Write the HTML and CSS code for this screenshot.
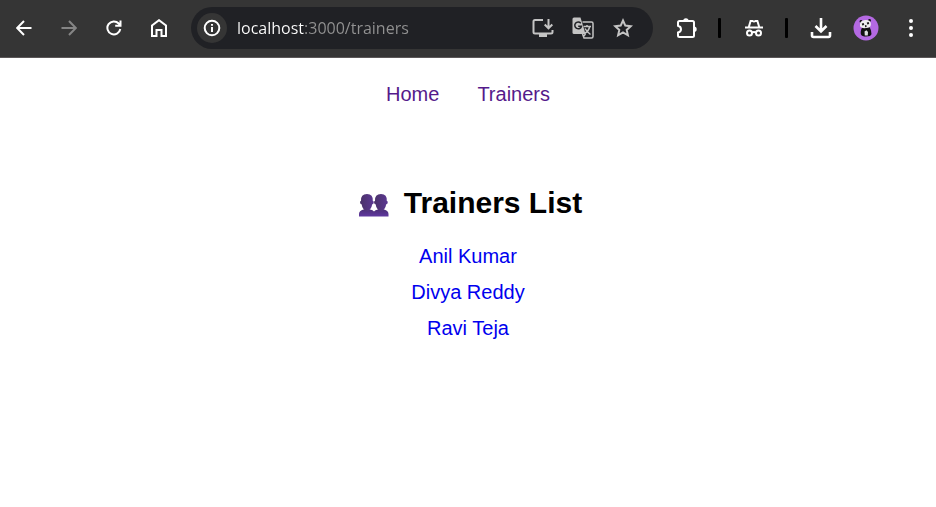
FILE: index.html
```html
<!DOCTYPE html>
<html lang="en">
<head>
<meta charset="utf-8">
<title>Trainers</title>
<link rel="stylesheet" href="styles.css">
</head>
<body>
<header class="toolbar">
  <button class="tool" aria-label="Back"><svg width="16" height="16" viewBox="0 0 16 16"><path d="M15.500 8H1.500M8 1L1.200 8L8 15"/></svg></button>
  <button class="tool dim" aria-label="Forward"><svg width="16" height="16" viewBox="0 0 16 16"><path d="M.5 8H14.500M8 1L14.800 8L8 15"/></svg></button>
  <button class="tool" aria-label="Reload"><svg width="16" height="16" viewBox="0 0 16 16"><path d="M14.300 9A6.500 6.500 0 1 1 12.700 3.500L14.500 5.300M14.500 .5V5.800H9.200"/></svg></button>
  <button class="tool" aria-label="Home page"><svg width="16" height="18" viewBox="0 0 16 18"><path d="M1 6.500L8 1.200L15 6.500V17H10.500V11H5.500V17H1Z"/></svg></button>
  <form class="omnibox">
    <button type="button" class="site-info" aria-label="Site information"><svg width="18" height="18" viewBox="0 0 18 18"><circle cx="9" cy="9" r="7.300"/><path d="M9 8V13M9 5V6.800"/></svg></button>
    <input class="url" type="text" aria-label="Address" value="localhost:3000/trainers" spellcheck="false">
    <button type="button" class="action" aria-label="Install"><svg width="22" height="20" viewBox="0 0 22 20"><path d="M11 2H3Q1.500 2 1.500 3.500V14Q1.500 15.500 3 15.500H19Q20.500 15.500 20.500 14V12M16.500 1V10M12.700 6.500L16.500 10.300L20.300 6.500"/><path class="solid" d="M7 15H15V19H7Z"/></svg></button>
    <button type="button" class="action" aria-label="Translate"><svg width="22" height="22" viewBox="0 0 22 22"><path class="solid" d="M2 .5H8.500L13.500 17H2Q.5 17 .5 15.500V2Q.5 .5 2 .5Z"/><path class="cut" d="M8.800 6.200A3.400 3.400 0 1 0 9.500 9.200H6.200"/><path class="thin" d="M10.500 5H19.500Q21 5 21 6.500V19.500Q21 21 19.500 21H12L10.500 17M11.500 9.500H19M15 8V9.500M17.700 9.500Q16.800 14 12.500 16.500M13 11.500Q15 15 18.500 17.500M13.500 17L11 20"/></svg></button>
    <button type="button" class="action" aria-label="Bookmark"><svg width="20" height="20" viewBox="0 0 20 20"><path d="M10 2.500L12.300 7.600L17.800 8.200L13.700 11.900L14.900 17.300L10 14.500L5.100 17.300L6.300 11.900L2.200 8.200L7.700 7.600Z"/></svg></button>
  </form>
  <div class="extras">
    <button class="tool wide" aria-label="Extensions"><svg width="22" height="22" viewBox="0 0 22 22"><path d="M3.500 4H16.500Q18 4 18 5.500V18.500Q18 20 16.500 20H3.500Q2 20 2 18.500V15.500Q5 14.800 5 12.200Q5 9.500 2 8.700V5.500Q2 4 3.500 4Z"/><path class="solid" d="M7.200 4A2.700 2.700 0 0 1 12.600 4ZM18 9.500A2.700 2.700 0 0 1 18 14.900Z"/></svg></button>
    <span class="divider"></span>
    <button class="tool wide" aria-label="Incognito"><svg width="20" height="20" viewBox="0 0 20 20"><path d="M1 9.500H19M4.800 9L6.600 3H8.500Q10 4 11.500 3H13.400L15.200 9"/><circle cx="5.500" cy="15" r="2.500"/><circle cx="14.500" cy="15" r="2.500"/><path d="M8 14.500Q10 13.500 12 14.500"/></svg></button>
    <span class="divider"></span>
    <button class="tool" aria-label="Downloads"><svg class="heavy" width="22" height="22" viewBox="0 0 22 22"><path d="M11 1V14M5.500 9L11 14.500L16.500 9M2 15V18.500Q2 20 3.500 20H18.500Q20 20 20 18.500V15"/></svg></button>
    <button class="tool" aria-label="Profile"><svg class="avatar" width="26" height="26" viewBox="0 0 26 26"><circle cx="13" cy="13" r="12.500" fill="#b469e2"/><g fill="#111"><circle cx="8" cy="6.500" r="1.400"/><circle cx="16.500" cy="5.500" r="1.400"/><path d="M9 12.500Q7 17 8 19.500Q9 21.500 13 21.500Q18 21.500 18.500 19Q18.500 15 16.500 12Z"/></g><path fill="#eee" d="M7 8.500Q7.500 5.500 12 5Q17 4.500 17.800 8Q18.500 12 15 12.800Q8 14 7 11Z"/><path d="M11.500 16.500L13.500 15.200L15 17L14.800 20.500H11.800Z" fill="#ddd"/><path d="M9 9.500L11 9M14 8.500L16 8M12 11.200L13.500 11" stroke="#222"/></svg></button>
    <button class="tool" aria-label="More options"><svg width="6" height="20" viewBox="0 0 6 20"><g class="solid"><circle cx="3" cy="3" r="2"/><circle cx="3" cy="10" r="2"/><circle cx="3" cy="17" r="2"/></g></svg></button>
  </div>
</header>
<nav class="nav">
  <a href="#home">Home</a>
  <a href="#trainers">Trainers</a>
</nav>
<main class="content">
  <h1 class="title">
    <svg width="30" height="24" viewBox="0 0 30 24" aria-hidden="true">
      <defs>
        <linearGradient id="face" x1="0" x2="1" y1="0" y2="0"><stop offset="0" stop-color="#4a3268"/><stop offset="1" stop-color="#5c3893"/></linearGradient>
        <linearGradient id="body" x1="0" x2="0" y1="0" y2="1"><stop offset="0" stop-color="#4c2f78"/><stop offset="1" stop-color="#6038a0"/></linearGradient>
      </defs>
      <path fill="url(#body)" d="M0 23.500V21Q0 17.500 4.500 16.500H11Q14 17 15 18.500Q16 17 19 16.500H25Q29.500 17.500 29.500 21V23.500Z"/>
      <path fill="url(#face)" d="M2 8Q1.500 1 8 1Q14.300 1 13.800 8Q15 7.800 14.700 9.700Q14.300 11.300 13.200 11.200Q12.800 14.500 11 16.500Q9.500 18.200 8 18.200Q6.300 18.200 4.800 16.500Q3 14.500 2.600 11.200Q1.500 11.300 1.100 9.700Q.8 7.800 2 8Z"/>
      <path fill="url(#face)" d="M16 8Q15.500 1 22 1Q28.300 1 27.800 8Q29 7.800 28.700 9.700Q28.300 11.300 27.200 11.200Q26.800 14.500 25 16.500Q23.500 18.200 22 18.200Q20.300 18.200 18.800 16.500Q17 14.500 16.600 11.200Q15.500 11.300 15.100 9.700Q14.800 7.800 16 8Z"/>
    </svg>
    <span>Trainers List</span>
  </h1>
  <ul class="trainers">
    <li><a href="#anil">Anil Kumar</a></li>
    <li><a href="#divya">Divya Reddy</a></li>
    <li><a href="#ravi">Ravi Teja</a></li>
  </ul>
</main>
</body>
</html>
```
FILE: styles.css
```css
* { box-sizing: border-box; }

body {
  margin: 0;
  background: #fff;
  color: #000;
  font: 20px/24px "Liberation Sans", Arial, sans-serif;
}

.toolbar {
  display: flex;
  align-items: center;
  padding: 7px 3px 8px 1px;
  background: #353535;
  border-bottom: 1px solid #5b5758;
}

button {
  display: flex;
  align-items: center;
  justify-content: center;
  flex: none;
  padding: 0;
  border: 0;
  background: none;
  color: #fff;
}

svg {
  display: block;
  flex: none;
  fill: none;
  stroke: currentColor;
  stroke-width: 2;
}

.solid { fill: currentColor; stroke: none; }
.thin { stroke-width: 1.5; }
.cut { stroke: #202125; stroke-width: 1.5; }
.heavy { stroke-width: 2.6; }
.avatar { stroke: none; }

.tool { width: 45px; height: 42px; }
.wide { width: 46px; }
.dim { color: #858585; }

.omnibox {
  display: flex;
  align-items: center;
  flex: 1;
  min-width: 0;
  height: 42px;
  margin: 0 0 0 10px;
  padding: 0 10px 0 6px;
  border-radius: 21px;
  background: #202125;
}

.site-info {
  width: 30px;
  height: 30px;
  border-radius: 50%;
  background: #353535;
}

.url {
  flex: 1;
  min-width: 0;
  margin: 0 0 0 10px;
  padding: 0;
  border: 0;
  outline: 0;
  background: linear-gradient(90deg, #fff 68px, #929292 68px);
  background-clip: text;
  color: transparent;
  caret-color: #fff;
  font: 16px/28px "Open Sans", "Noto Sans", sans-serif;
}

.action { width: 40px; height: 40px; color: #c4c4c4; }

.extras { display: flex; align-items: center; padding-left: 11px; }

.divider {
  width: 3px;
  height: 20px;
  margin: 0 10px 0 8px;
  border-radius: 1px;
  background: #000;
}

.nav {
  display: flex;
  justify-content: center;
  gap: 38px;
  padding: 24px 0;
}

.nav a { color: #551a8b; text-decoration: none; }

.content { padding: 56px 20px 20px; }

.title {
  display: flex;
  align-items: center;
  justify-content: center;
  gap: 15px;
  margin: 0 0 24px;
  padding-left: 5px;
  font-size: 30px;
  line-height: 34px;
}

.title svg { stroke: none; margin-top: 4px; }

.trainers {
  display: flex;
  flex-direction: column;
  align-items: center;
  gap: 12px;
  margin: 0;
  padding: 0;
  list-style: none;
}

.trainers a { color: #00e; text-decoration: none; }
```
